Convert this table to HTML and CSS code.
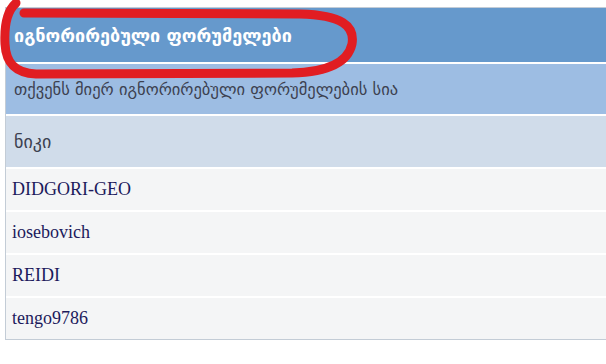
FILE: index.html
```html
<!DOCTYPE html>
<html lang="ka">
<head>
    <meta charset="UTF-8">
    <title>იგნორირებული ფორუმელები</title>
    <link rel="stylesheet" href="styles.css">
</head>
<body>

    <div class="panel">
        <table class="ignore-list">
            <tr>
                <th class="title">იგნორირებული ფორუმელები</th>
            </tr>
            <tr>
                <td class="subtitle">თქვენს მიერ იგნორირებული ფორუმელების სია</td>
            </tr>
            <tr>
                <td class="col-head">ნიკი</td>
            </tr>
            <tr><td class="user">DIDGORI-GEO</td></tr>
            <tr><td class="user">iosebovich</td></tr>
            <tr><td class="user">REIDI</td></tr>
            <tr><td class="user">tengo9786</td></tr>
        </table>

        <!-- marker circle drawn over the title -->
        <svg class="marker" width="370" height="90" viewBox="0 0 370 90">
            <path d="M16 3 C8 10 4 24 5 44 C6 62 14 73 36 74 L292 73 C330 72 348 62 352 44 C355 26 342 15 300 14 L24 13"
                  fill="none" stroke="#e11d22" stroke-width="9" stroke-linecap="round" stroke-linejoin="round"/>
        </svg>
    </div>

</body>
</html>
```

FILE: styles.css
```css
body {
    margin: 0;
    background: #ffffff;
    overflow: hidden;
}

.panel {
    position: relative;
    padding-top: 7px;
    padding-left: 5px;
}

/* table runs off the right side of the window */
.ignore-list {
    width: 620px;
    border-collapse: separate;
    border-spacing: 0;
    border-top: 1px solid #c3ccd6;
    border-left: 1px solid #c3ccd6;
    border-bottom: 1px solid #c3ccd6;
}

.ignore-list th,
.ignore-list td {
    text-align: left;
    padding: 0 0 0 8px;
    border-bottom: 2px solid #ffffff;
}

.title {
    height: 54px;
    background: #6699cc;
    color: #ffffff;
    font-family: "DejaVu Sans", sans-serif;
    font-weight: bold;
    font-size: 18px;
}

.subtitle {
    height: 50px;
    background: #9dbde3;
    color: #3c4150;
    font-family: "DejaVu Sans", sans-serif;
    font-size: 16.5px;
}

.col-head {
    height: 51px;
    background: #d0dcea;
    color: #3c4150;
    font-family: "DejaVu Sans", sans-serif;
    font-size: 18px;
}

.ignore-list .user {
    height: 41px;
    padding-left: 6px;
    background: #f4f5f6;
    color: #1c1a5c;
    font-family: "Liberation Serif", serif;
    font-size: 18px;
}

.ignore-list tr:last-child td {
    border-bottom: none;
}

.marker {
    position: absolute;
    top: 0;
    left: 0;
}
```
